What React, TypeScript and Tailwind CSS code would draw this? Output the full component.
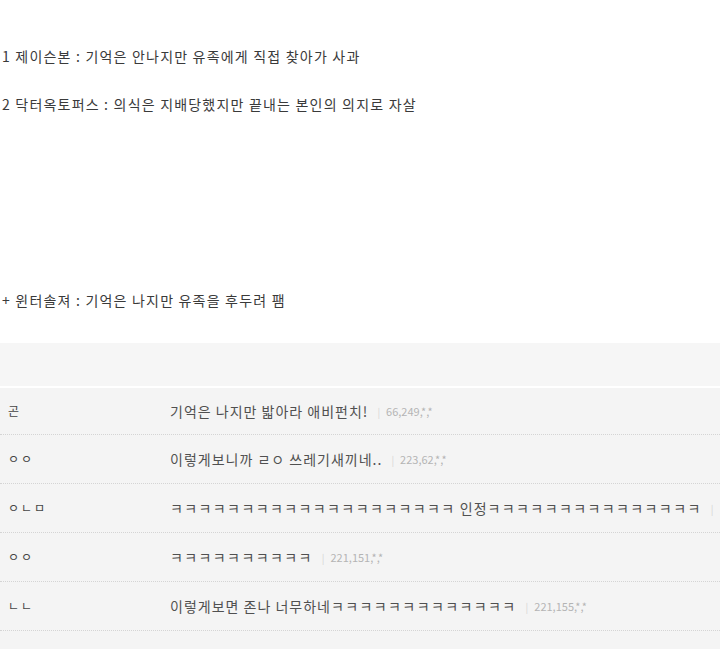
const font = { fontFamily: '"Noto Sans CJK KR", "Noto Sans", sans-serif' };

type Reply = { name: string; text: string; ip: string };

const replies: Reply[] = [
  { name: '곤', text: '기억은 나지만 밟아라 애비펀치!', ip: '66,249,*,*' },
  { name: 'ㅇㅇ', text: '이렇게보니까 ㄹㅇ 쓰레기새끼네..', ip: '223,62,*,*' },
  {
    name: 'ㅇㄴㅁ',
    text: 'ㅋㅋㅋㅋㅋㅋㅋㅋㅋㅋㅋㅋㅋㅋㅋㅋㅋㅋㅋㅋ 인정ㅋㅋㅋㅋㅋㅋㅋㅋㅋㅋㅋㅋㅋㅋㅋ',
    ip: '',
  },
  { name: 'ㅇㅇ', text: 'ㅋㅋㅋㅋㅋㅋㅋㅋㅋㅋ', ip: '221,151,*,*' },
  { name: 'ㄴㄴ', text: '이렇게보면 존나 너무하네ㅋㅋㅋㅋㅋㅋㅋㅋㅋㅋㅋㅋㅋ', ip: '221,155,*,*' },
];

// runs of ㅋ sit a little looser than the syllables around them
function Comment({ text }: { text: string }) {
  const parts = text.split(/(ㅋ+)/).filter(Boolean);
  return (
    <span className="text-[14px] tracking-[1px] text-[#505050]">
      {parts.map((p, i) =>
        p[0] === 'ㅋ' ? (
          <span key={i} className="tracking-[1.4px]">
            {p}
          </span>
        ) : (
          <span key={i}>{p}</span>
        ),
      )}
    </span>
  );
}

function ReplyRow({ reply, first }: { reply: Reply; first: boolean }) {
  return (
    <div
      className={`flex items-center overflow-hidden border-b border-dotted border-[#d4d4d4] whitespace-nowrap ${
        first ? 'h-[47px]' : 'h-[49px]'
      }`}
    >
      <div className="w-[170px] shrink-0 pl-2 text-[12px] tracking-[2px] text-[#444]">{reply.name}</div>
      <div className="flex items-center">
        <Comment text={reply.text} />
        <span className="ml-[9px] mr-[6px] text-[10px] text-[#d4d4d4]">|</span>
        {reply.ip && <span className="text-[11px] text-[#b4b4b4]">{reply.ip}</span>}
      </div>
    </div>
  );
}

export default function App() {
  return (
    <div className="h-[649px] w-[720px] overflow-hidden bg-white" style={font}>
      <div className="pl-[2px] text-[14px] tracking-[1.2px] text-[#3a3a3a]">
        <p className="pt-[46px] leading-[20px]">1 제이슨본 : 기억은 안나지만 유족에게 직접 찾아가 사과</p>
        <p className="pt-[28px] leading-[20px]">2 닥터옥토퍼스 : 의식은 지배당했지만 끝내는 본인의 의지로 자살</p>
        <p className="pt-[176px] leading-[20px]">+ 윈터솔져 : 기억은 나지만 유족을 후두려 팸</p>
      </div>

      <div className="mt-[33px] h-[43px] bg-[#f6f6f6]" />
      <div className="mt-[2px] h-[300px] bg-[#f4f4f4]">
        {replies.map((r, i) => (
          <ReplyRow key={i} reply={r} first={i === 0} />
        ))}
      </div>
    </div>
  );
}
